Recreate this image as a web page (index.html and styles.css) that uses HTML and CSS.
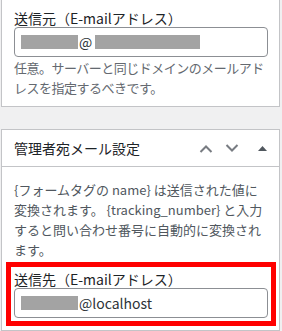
FILE: index.html
```html
<!DOCTYPE html>
<html>
<head>
    <title>メール設定</title>
    <link rel="stylesheet" href="styles.css">
</head>
<body>
<div class="postbox postbox-first">
    <div class="inside">
        <div class="field">
            <div class="field-label">送信元（E-mailアドレス）</div>
            <div class="text-input">
                <span class="masked masked-short"></span><span class="at">@</span><span class="masked masked-long"></span>
            </div>
        </div>
        <p class="description">任意。サーバーと同じドメインのメールアドレスを指定するべきです。</p>
    </div>
</div>

<div class="postbox">
    <div class="postbox-header">
        <h2 class="postbox-title">管理者宛メール設定</h2>
        <div class="handle-actions">
            <span class="handle-btn handle-higher">
                <svg width="14" height="9" viewBox="0 0 14 9"><polyline points="1.5,8 7,2.5 12.5,8" fill="none" stroke="currentColor" stroke-width="2"/></svg>
            </span>
            <span class="handle-btn handle-lower">
                <svg width="14" height="9" viewBox="0 0 14 9"><polyline points="1.5,1 7,6.5 12.5,1" fill="none" stroke="currentColor" stroke-width="2"/></svg>
            </span>
            <span class="handle-btn handle-toggle">
                <svg width="9" height="5" viewBox="0 0 9 5"><polygon points="0,5 4.5,0 9,5" fill="currentColor"/></svg>
            </span>
        </div>
    </div>
    <div class="inside">
        <p class="tag-help">{フォームタグの name} は送信された値に変換されます。 {tracking_number} と入力すると問い合わせ番号に自動的に変換されます。</p>
        <div class="field field-marked">
            <div class="field-label">送信先（E-mailアドレス）</div>
            <div class="text-input">
                <span class="masked masked-short"></span><span class="at">@localhost</span>
            </div>
        </div>
    </div>
</div>
</body>
</html>
```

FILE: styles.css
```css
body {
    font-family: "Noto Sans CJK JP", "Noto Sans", sans-serif;
    margin: 0;
    padding: 0;
    background-color: #f0f0f1;
    color: #1d2327;
    font-size: 14px;
}
.postbox {
    margin: 0 2px 0 1px;
    background: #ffffff;
    border: 1px solid #c3c4c7;
}
.postbox-first {
    margin-top: -4px;
    margin-bottom: 22px;
}
.postbox-first .inside {
    padding: 12px 11px 8px 12px;
}
.inside {
    padding: 0 11px 12px 12px;
}
.field-label {
    line-height: 18px;
    color: #1d2327;
}
.text-input {
    box-sizing: border-box;
    height: 30px;
    border: 1px solid #8c8f94;
    border-radius: 4px;
    padding: 0 6px;
    display: flex;
    align-items: center;
    color: #2c3338;
    line-height: 18px;
}
.masked {
    display: inline-block;
    height: 14px;
    background-color: #a3a3a3;
}
.masked-short {
    width: 57px;
}
.masked-long {
    width: 105px;
    margin-left: 3px;
}
.at {
    margin-left: 1px;
}
.description {
    margin: 1px 0 0;
    font-size: 13px;
    line-height: 20px;
    letter-spacing: -0.5px;
    color: #646970;
}
.postbox-header {
    display: flex;
    align-items: center;
    justify-content: space-between;
    height: 36px;
    border-bottom: 1px solid #c3c4c7;
}
.postbox-title {
    margin: 0;
    padding-left: 12px;
    font-size: 14px;
    font-weight: normal;
    color: #1d2327;
}
.handle-actions {
    display: flex;
    align-items: center;
    height: 100%;
}
.handle-btn {
    display: flex;
    align-items: center;
    justify-content: center;
    width: 26px;
    height: 100%;
    color: #787c82;
}
.handle-toggle {
    width: 34px;
    color: #50575e;
}
.tag-help {
    margin: 13px 0 10px;
    font-size: 13px;
    line-height: 20px;
    color: #50575e;
}
.field-marked {
    outline: 5px solid #ff0000;
    outline-offset: 3px;
}
```
